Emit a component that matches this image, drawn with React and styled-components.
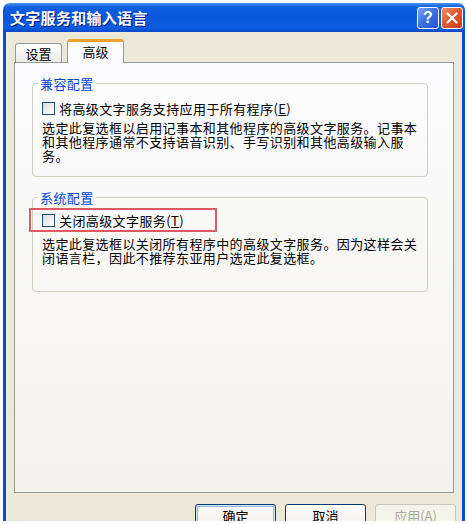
import styled, { createGlobalStyle } from "styled-components";

export default function App() {
  return (
    <>
      <GlobalStyle />
      <Window>
        <TitleBar>
          <Title>文字服务和输入语言</Title>
          <TitleButtons>
            <HelpBtn>?</HelpBtn>
            <CloseBtn>
              <svg width="12" height="12" viewBox="0 0 12 12">
                <path d="M1.5 1.5 L10.5 10.5 M10.5 1.5 L1.5 10.5" stroke="#fff" strokeWidth="2.2" strokeLinecap="round" />
              </svg>
            </CloseBtn>
          </TitleButtons>
        </TitleBar>
        <Body>
          <Tabs>
            <Tab $width={47}>设置</Tab>
            <Tab $width={57} $active>高级</Tab>
          </Tabs>
          <Panel>
            <Group $padBottom={13}>
              <Legend>兼容配置</Legend>
              <CheckRow>
                <Checkbox />
                <span>将高级文字服务支持应用于所有程序(<u>E</u>)</span>
              </CheckRow>
              <Desc>
                选定此复选框以启用记事本和其他程序的高级文字服务。记事本
                <br />
                和其他程序通常不支持语音识别、手写识别和其他高级输入服
                <br />
                务。
              </Desc>
            </Group>
            <Group $padBottom={26} $gap={13}>
              <Legend>系统配置</Legend>
              <Highlight>
                <Checkbox />
                <span>关闭高级文字服务(<u>T</u>)</span>
              </Highlight>
              <Desc>
                选定此复选框以关闭所有程序中的高级文字服务。因为这样会关
                <br />
                闭语言栏，因此不推荐东亚用户选定此复选框。
              </Desc>
            </Group>
          </Panel>
          <ButtonRow>
            <Button $default>确定</Button>
            <Button>取消</Button>
            <Button disabled>应用(<u>A</u>)</Button>
          </ButtonRow>
        </Body>
      </Window>
    </>
  );
}

const GlobalStyle = createGlobalStyle`
  body {
    margin: 0;
    background: #fff;
    font-family: "Noto Sans CJK SC", "Liberation Sans", sans-serif;
  }
`;
const Window = styled.div`
  margin: 3px 0 0 3px;
  width: 462px;
  height: 518px;
  overflow: hidden;
  border-radius: 7px 7px 0 0;
  display: flex;
  flex-direction: column;
`;
const TitleBar = styled.div`
  height: 29px;
  flex: none;
  display: flex;
  align-items: center;
  justify-content: space-between;
  padding-left: 7px;
  background: linear-gradient(
    to bottom,
    #4a93f5 0%,
    #0f5fe0 14%,
    #0a58d8 50%,
    #0c5de0 86%,
    #0848c8 100%
  );
`;
const Title = styled.div`
  color: #fff;
  font-size: 15px;
  font-weight: bold;
  letter-spacing: 0.3px;
  text-shadow: 1px 1px 0 #0a1a8a;
`;
const TitleButtons = styled.div`
  display: flex;
  gap: 2px;
  margin-right: 2px;
`;
const HelpBtn = styled.div`
  width: 22px;
  height: 22px;
  box-sizing: border-box;
  border: 1px solid #fff;
  border-radius: 3px;
  background: linear-gradient(135deg, #7aa8f7 0%, #3a72e4 45%, #2457d0 100%);
  color: #fff;
  font-family: "Liberation Sans", sans-serif;
  font-weight: bold;
  font-size: 16px;
  display: flex;
  align-items: center;
  justify-content: center;
`;
const CloseBtn = styled(HelpBtn)`
  background: linear-gradient(135deg, #f0906a 0%, #e05a30 45%, #c8401a 100%);
`;
const Body = styled.div`
  flex: 1;
  background: #ece9d8;
  border-left: 3px solid #0b4bd4;
  border-right: 3px solid #0b4bd4;
  padding: 7px 8px 0;
`;
const Tabs = styled.div`
  display: flex;
  align-items: flex-end;
  gap: 5px;
  padding-left: 1px;
  height: 24px;
  margin-bottom: -1px;
  position: relative;
  z-index: 1;
`;
const Tab = styled.div`
  width: ${(p) => p.$width}px;
  height: ${(p) => (p.$active ? 24 : 19)}px;
  margin-bottom: ${(p) => (p.$active ? 0 : 1)}px;
  box-sizing: border-box;
  border: 1px solid #919b9c;
  border-bottom: none;
  border-top: ${(p) => (p.$active ? "3px solid #f0a030" : "1px solid #919b9c")};
  border-radius: 3px 3px 0 0;
  background: ${(p) =>
    p.$active ? "#fcfcfe" : "linear-gradient(to bottom, #fff, #ecebe6)"};
  font-size: 13px;
  line-height: 1;
  display: flex;
  align-items: ${(p) => (p.$active ? "flex-start" : "center")};
  padding-top: ${(p) => (p.$active ? 3 : 0)}px;
  justify-content: center;
`;
const Panel = styled.div`
  height: 431px;
  box-sizing: border-box;
  border: 1px solid #919b9c;
  background: linear-gradient(to bottom, #fcfcfe, #f3f2ec);
  padding: 13px 25px 0 17px;
`;
const Group = styled.fieldset`
  margin: ${(p) => p.$gap || 0}px 0 0;
  padding: 0 8px ${(p) => p.$padBottom}px 9px;
  border: 1px solid #d0d0bf;
  border-radius: 4px;
  min-width: 0;
  font-size: 13px;
  letter-spacing: 0.4px;
`;
const Legend = styled.legend`
  padding: 0 2px;
  margin-left: -4px;
  color: #0046d5;
  font-size: 13px;
  line-height: 15px;
`;
const CheckRow = styled.div`
  display: flex;
  align-items: center;
  gap: 4px;
  height: 15px;
  margin-top: 10px;
  white-space: nowrap;
`;
const Highlight = styled.div`
  display: flex;
  align-items: center;
  gap: 4px;
  width: 188px;
  height: 24px;
  box-sizing: border-box;
  margin: 3px 0 0 -13px;
  padding-left: 11px;
  border: 2px solid #dd5a64;
  white-space: nowrap;
`;
const Checkbox = styled.span`
  width: 13px;
  height: 13px;
  flex: none;
  box-sizing: border-box;
  border: 1px solid #1c5180;
  background: linear-gradient(135deg, #dcdcd7 0%, #fff 100%);
`;
const Desc = styled.div`
  margin-top: 5px;
  line-height: 14px;
  white-space: nowrap;
  color: #000;
`;
const ButtonRow = styled.div`
  display: flex;
  justify-content: flex-end;
  gap: 9px;
  margin: 11px -2px 0 0;
`;
const Button = styled.button`
  width: 81px;
  height: 23px;
  border: 1px solid ${(p) => (p.disabled ? "#c9c7ba" : "#003c74")};
  border-radius: 3px;
  background: ${(p) =>
    p.disabled
      ? "#f5f4ea"
      : "linear-gradient(to bottom, #fff 0%, #f3f2ee 80%, #d6d0c5 100%)"};
  box-shadow: ${(p) =>
    p.$default ? "inset 0 0 0 1px #cee7ff, inset 0 0 0 2px #98b8ea" : "none"};
  color: ${(p) => (p.disabled ? "#aca899" : "#000")};
  font-family: inherit;
  font-size: 13px;
  padding: 0;
`;
